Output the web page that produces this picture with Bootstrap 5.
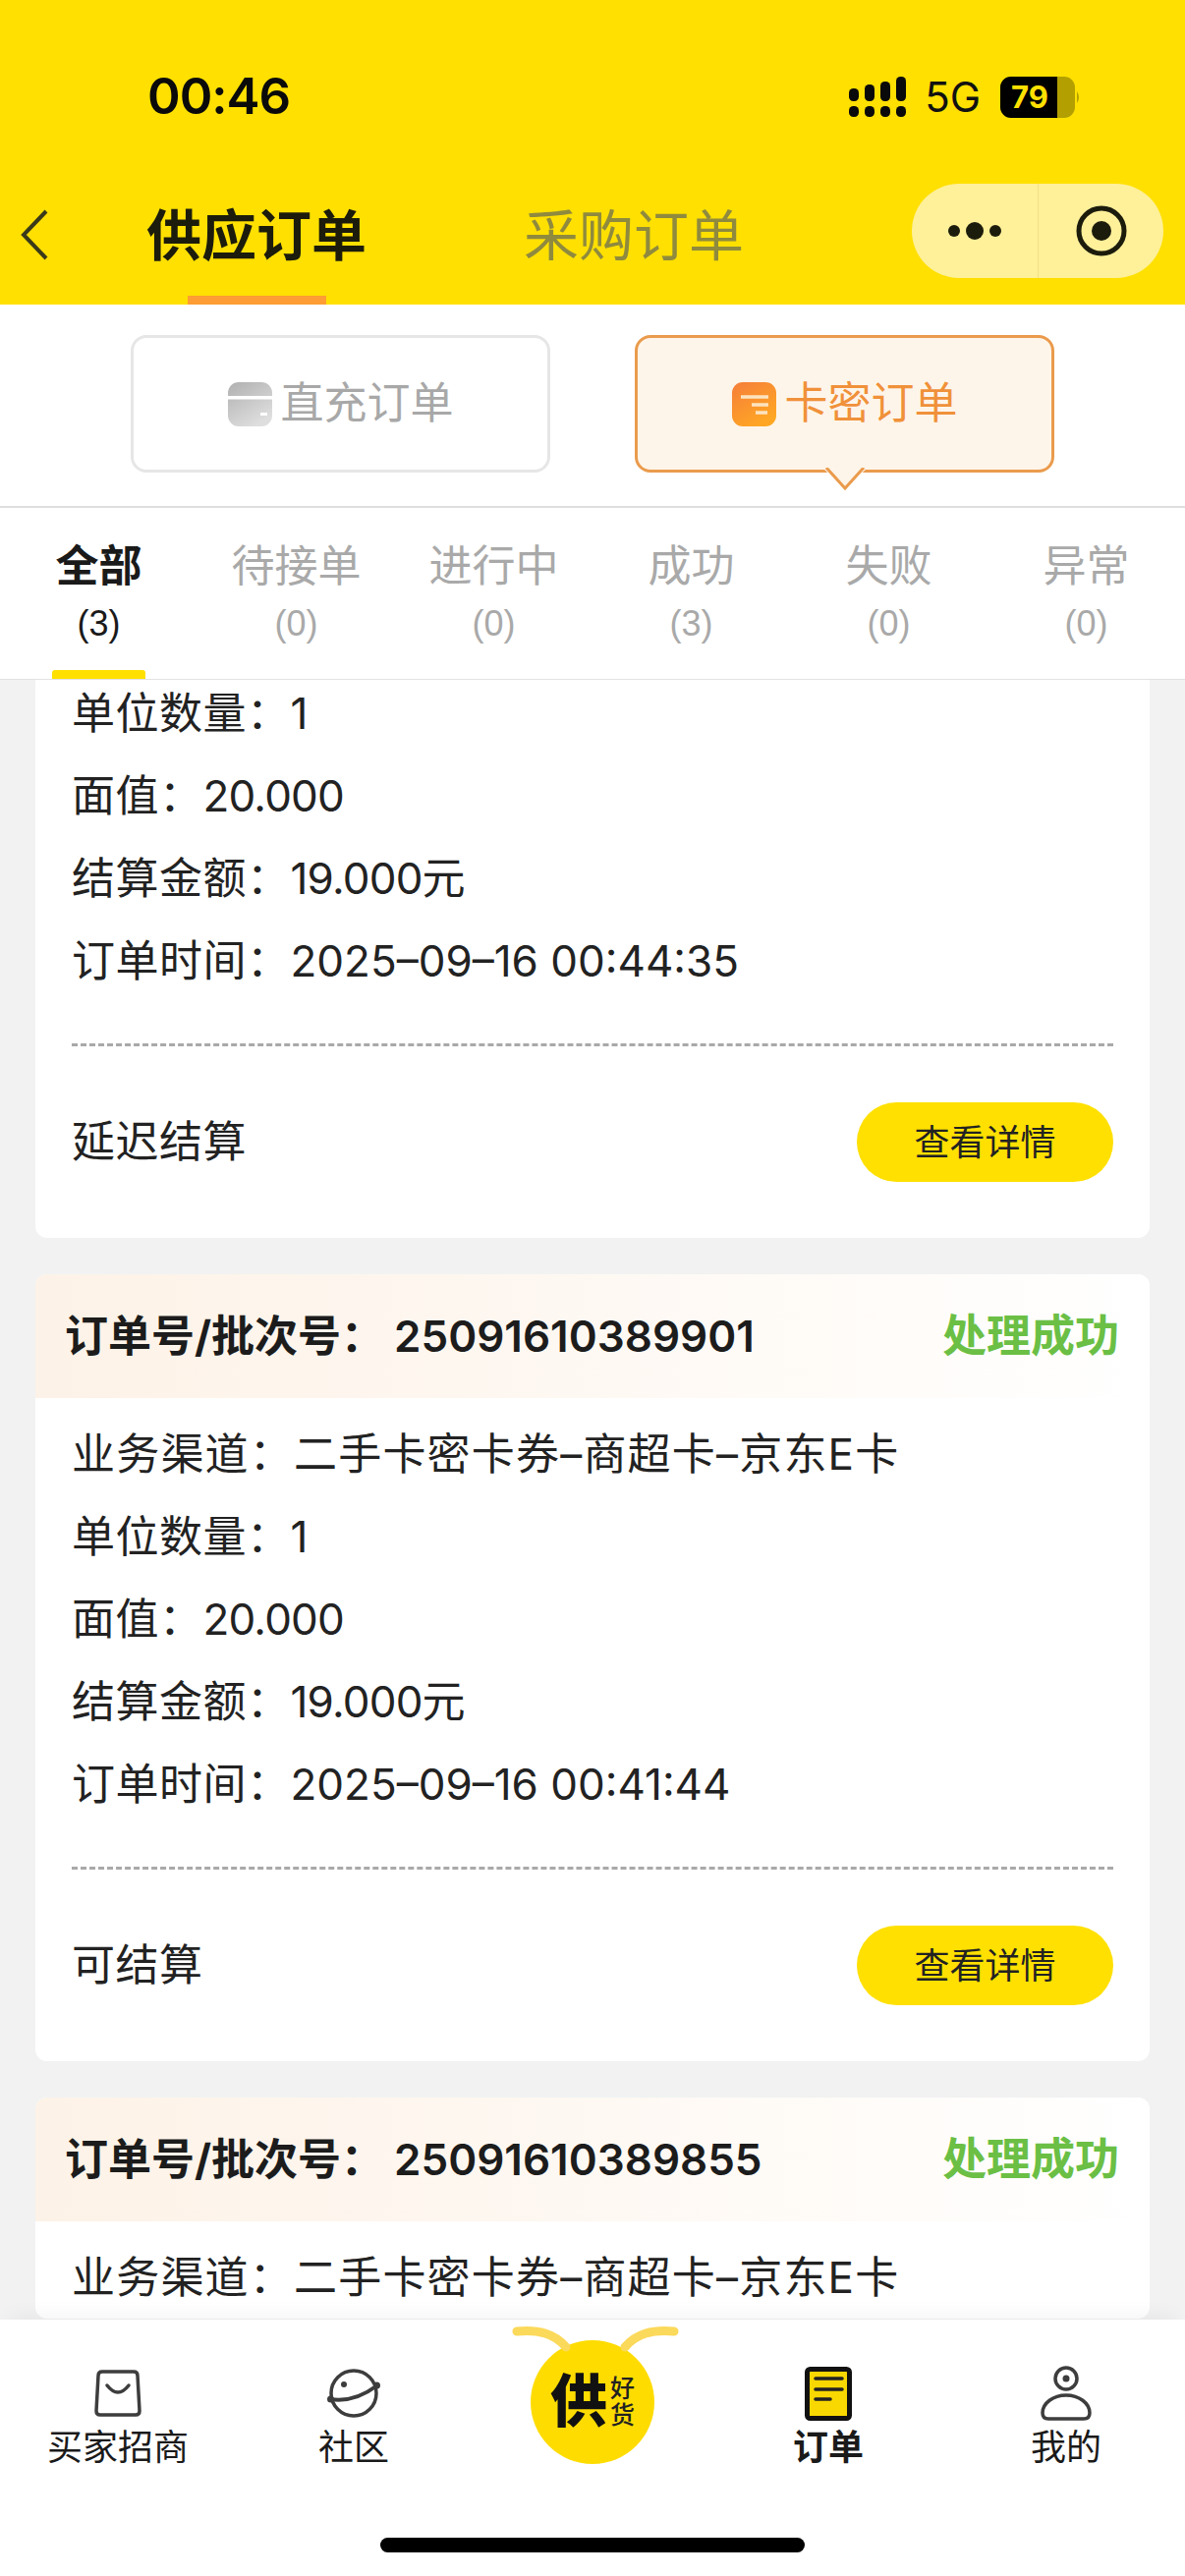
<!DOCTYPE html>
<html lang="zh-CN">
<head>
  <meta charset="UTF-8" />
  <title>供应订单</title>
  <meta name="viewport" content="width=device-width, initial-scale=1" />
  <link href="https://cdn.jsdelivr.net/npm/bootstrap@5.3.0/dist/css/bootstrap.min.css" rel="stylesheet" />
  <style>
    body {
      font-family: "Liberation Sans", "Noto Sans CJK SC", sans-serif;
      color: #1c1c1c;
      background: #f2f2f2;
    }
    .phone { width: 1206px; height: 2622px; overflow: hidden; }

    /* yellow top */
    .top-head { height: 310px; background: #ffe000; flex: none; }
    .status-row { height: 187px; padding: 10px 106px 0 150px; }
    .status-time { font-family: Inter, sans-serif; font-size: 51px; font-weight: 600; color: #0a0a0a; letter-spacing: -1px; }
    .status-net { font-family: Inter, sans-serif; font-size: 42px; color: #111; margin: 0 20px 0 19px; }
    .nav-row { height: 123px; }
    .back-btn { width: 148px; padding: 26px 0 0 20px; }
    .head-tab { font-size: 56px; line-height: 56px; padding-top: 26px; width: 226px; white-space: nowrap; }
    .head-tab.on { font-weight: 700; color: #1c1c0c; }
    .head-tab.off { color: #8f8a3e; margin-left: 159px; }
    .head-bar { width: 141px; height: 9px; background: #fd9d33; margin-top: auto; }
    .capsule { width: 256px; height: 96px; background: #fff09a; border-radius: 48px; margin: 0 22px 0 auto; }
    .capsule-cell { width: 128px; height: 100%; }
    .capsule-cell + .capsule-cell { border-left: 1px solid #f2e283; }

    /* direct / card switch */
    .seg-row { height: 207px; background: #fff; border-bottom: 2px solid #dedede; padding-top: 31px; gap: 86px; flex: none; }
    .seg-btn {
      width: 427px; height: 140px; border: 3px solid #e6e6e6; border-radius: 16px;
      font-size: 44px; color: #a8a8a8; gap: 9px; position: relative; background: #fff;
    }
    .seg-btn.on { border-color: #ea9b4c; background: #fef5ea; color: #f0913a; }
    .seg-arrow { position: absolute; left: 50%; margin-left: -21px; bottom: -22px; }

    /* status tabs */
    .tab-row { height: 175px; background: #fff; border-bottom: 1px solid #e2e2e2; flex: none; }
    .tab-item { width: 201px; color: #a9a9a9; }
    .tab-name { font-size: 44px; line-height: 44px; margin-top: 38px; }
    .tab-num { font-size: 36px; line-height: 36px; margin-top: 18px; }
    .tab-item.on { color: #1a1a1a; }
    .tab-item.on .tab-name { font-weight: 700; }
    .tab-line { width: 95px; height: 9px; margin-top: auto; border-radius: 3px 3px 0 0; }
    .tab-item.on .tab-line { background: #ffe000; }

    /* order list */
    .order-list { flex: 1 1 0; min-height: 0; overflow: hidden; padding: 0 36px; font-family: Inter, "Noto Sans CJK SC", sans-serif; }
    .order-box { background: #fff; border-radius: 12px; margin-bottom: 37px; flex: none; }
    .order-box.cut { border-radius: 0 0 12px 12px; margin-top: -8px; }
    .order-head {
      height: 126px; padding: 0 31px 0 30px; border-radius: 12px 12px 0 0;
      background: linear-gradient(90deg, #fdf2e7, #fffdfb 85%, #fff);
      font-size: 44px; font-weight: 700;
    }
    .order-num { font-weight: 600; margin-left: 10px; }
    .order-state { color: #6bbf45; font-size: 45px; }
    .order-body { padding: 15px 37px 0; }
    .order-line { height: 84px; line-height: 84px; font-size: 44px; color: #222; white-space: nowrap; letter-spacing: .5px; }
    .order-line.wide { letter-spacing: 1.2px; }
    .order-val { letter-spacing: -.8px; }
    .order-time { letter-spacing: 0; }
    .order-foot { border-top: 3px dashed #a9a9a9; margin-top: 42px; height: 198px; padding-top: 57px; font-size: 44px; color: #222; }
    .foot-label { line-height: 81px; letter-spacing: .5px; }
    .detail-btn {
      width: 261px; height: 81px; border: 0; border-radius: 41px; background: #ffe000;
      font-size: 36px; color: #222; padding: 0;
    }

    /* bottom bar */
    .foot-bar { height: 261px; background: #fff; box-shadow: 0 -14px 18px -10px rgba(0,0,0,.05); flex: none; position: relative; }
    .foot-item { width: 240px; padding-top: 46px; font-size: 36px; line-height: 40px; color: #1a1a1a; }
    .foot-item.last-one { margin-left: 2px; }
    .foot-icon { height: 58px; margin-bottom: 7px; }
    .foot-mid { width: 240px; margin-left: 3px; }
    .bee-logo { width: 126px; height: 126px; border-radius: 50%; background: #ffdc00; margin: 21px auto 0; gap: 3px; position: relative; }
    .bee-horn { position: absolute; left: -19px; top: -17px; }
    .bee-big { font-size: 58px; font-weight: 900; color: #111; line-height: 58px; }
    .bee-small { font-size: 25px; line-height: 27px; color: #222; font-weight: 500; }
    .home-line { position: absolute; left: 387px; bottom: 24px; width: 432px; height: 15px; border-radius: 8px; background: #000; }
  </style>
</head>
<body>
  <div class="phone d-flex flex-column">
    <div class="top-head">
      <div class="status-row d-flex align-items-center">
        <span class="status-time">00:46</span>
        <div class="ms-auto d-flex align-items-center">
          <svg width="58" height="41" viewBox="0 0 58 41" fill="#0a0a0a">
            <rect x="0" y="12" width="10" height="13" rx="4.5"/><rect x="0" y="30" width="10" height="11" rx="4.5"/>
            <rect x="16" y="8" width="10" height="17" rx="4.5"/><rect x="16" y="30" width="10" height="11" rx="4.5"/>
            <rect x="32" y="5" width="10" height="20" rx="4.5"/><rect x="32" y="30" width="10" height="11" rx="4.5"/>
            <rect x="48" y="0" width="10" height="25" rx="4.5"/><rect x="48" y="30" width="10" height="11" rx="4.5"/>
          </svg>
          <span class="status-net">5G</span>
          <svg width="82" height="42" viewBox="0 0 82 42">
            <rect x="0" y="0" width="76" height="42" rx="11" fill="#b3a000"/>
            <path d="M11 0H58V42H11A11 11 0 0 1 0 31V11A11 11 0 0 1 11 0Z" fill="#000"/>
            <path d="M78 15q4 6 0 12z" fill="#b3a000"/>
            <text x="30" y="32" font-family="Inter, sans-serif" font-size="31" font-weight="700" fill="#ffe000" text-anchor="middle">79</text>
          </svg>
        </div>
      </div>
      <div class="nav-row d-flex">
        <div class="back-btn">
          <svg width="30" height="52" viewBox="0 0 30 52" fill="none" stroke="#3a3a1a" stroke-width="4"><path d="M27 2L4 26l23 24"/></svg>
        </div>
        <div class="head-tab on d-flex flex-column align-items-center">供应订单<div class="head-bar"></div></div>
        <div class="head-tab off">采购订单</div>
        <div class="capsule d-flex">
          <div class="capsule-cell d-flex align-items-center justify-content-center">
            <svg width="58" height="20" viewBox="0 0 58 20" fill="#1c1c0c"><circle cx="8" cy="10" r="6"/><circle cx="29" cy="10" r="9"/><circle cx="50" cy="10" r="6"/></svg>
          </div>
          <div class="capsule-cell d-flex align-items-center justify-content-center">
            <svg width="52" height="52" viewBox="0 0 52 52"><circle cx="26" cy="26" r="23" fill="none" stroke="#1c1c0c" stroke-width="5"/><circle cx="26" cy="26" r="10" fill="#1c1c0c"/></svg>
          </div>
        </div>
      </div>
    </div>

    <div class="seg-row d-flex justify-content-center align-items-start">
      <div class="seg-btn d-flex align-items-center justify-content-center">
        <svg width="45" height="45" viewBox="0 0 45 45">
          <defs><linearGradient id="gr" x1="0" y1="0" x2="0.6" y2="1"><stop offset="0" stop-color="#b0b0b0"/><stop offset="1" stop-color="#dedede"/></linearGradient></defs>
          <rect width="45" height="45" rx="11" fill="url(#gr)"/>
          <rect y="14" width="45" height="3.5" fill="#fff"/>
          <rect x="33" y="31" width="7" height="3" fill="#fff"/>
        </svg>
        <span>直充订单</span>
      </div>
      <div class="seg-btn on d-flex align-items-center justify-content-center">
        <svg width="45" height="45" viewBox="0 0 45 45">
          <defs><linearGradient id="or" x1="0" y1="0" x2="0.6" y2="1"><stop offset="0" stop-color="#f57e3a"/><stop offset="1" stop-color="#ffa724"/></linearGradient></defs>
          <rect width="45" height="45" rx="11" fill="url(#or)"/>
          <path d="M9 15h28M20 23h17M24 31h12" stroke="#fde3c0" stroke-width="3.5" fill="none"/>
        </svg>
        <span>卡密订单</span>
        <svg class="seg-arrow" width="42" height="24" viewBox="0 0 42 24">
          <path d="M0 2H42L21 21Z" fill="#fef5ea"/>
          <path d="M2 0L21 21L40 0" fill="none" stroke="#ea9b4c" stroke-width="3"/>
        </svg>
      </div>
    </div>

    <div class="tab-row d-flex">
      <div class="tab-item on d-flex flex-column align-items-center"><div class="tab-name">全部</div><div class="tab-num">(3)</div><div class="tab-line"></div></div>
      <div class="tab-item d-flex flex-column align-items-center"><div class="tab-name">待接单</div><div class="tab-num">(0)</div><div class="tab-line"></div></div>
      <div class="tab-item d-flex flex-column align-items-center"><div class="tab-name">进行中</div><div class="tab-num">(0)</div><div class="tab-line"></div></div>
      <div class="tab-item d-flex flex-column align-items-center"><div class="tab-name">成功</div><div class="tab-num">(3)</div><div class="tab-line"></div></div>
      <div class="tab-item d-flex flex-column align-items-center"><div class="tab-name">失败</div><div class="tab-num">(0)</div><div class="tab-line"></div></div>
      <div class="tab-item d-flex flex-column align-items-center"><div class="tab-name">异常</div><div class="tab-num">(0)</div><div class="tab-line"></div></div>
    </div>

    <div class="order-list d-flex flex-column">
      <!-- first card is scrolled partly under the tabs -->
      <div class="order-box cut">
        <div class="order-body pt-0">
          <div class="order-line">单位数量：1</div>
          <div class="order-line">面值：<span class="order-val">20.000</span></div>
          <div class="order-line">结算金额：<span class="order-val">19.000</span>元</div>
          <div class="order-line">订单时间：<span class="order-time">2025–09–16 00:44:35</span></div>
          <div class="order-foot d-flex justify-content-between align-items-start">
            <span class="foot-label">延迟结算</span>
            <button class="detail-btn" type="button">查看详情</button>
          </div>
        </div>
      </div>

      <div class="order-box">
        <div class="order-head d-flex align-items-center justify-content-between">
          <span>订单号/批次号：<span class="order-num">25091610389901</span></span>
          <span class="order-state">处理成功</span>
        </div>
        <div class="order-body">
          <div class="order-line wide">业务渠道：二手卡密卡券–商超卡–京东E卡</div>
          <div class="order-line">单位数量：1</div>
          <div class="order-line">面值：<span class="order-val">20.000</span></div>
          <div class="order-line">结算金额：<span class="order-val">19.000</span>元</div>
          <div class="order-line">订单时间：<span class="order-time">2025–09–16 00:41:44</span></div>
          <div class="order-foot d-flex justify-content-between align-items-start">
            <span class="foot-label">可结算</span>
            <button class="detail-btn" type="button">查看详情</button>
          </div>
        </div>
      </div>

      <div class="order-box">
        <div class="order-head d-flex align-items-center justify-content-between">
          <span>订单号/批次号：<span class="order-num">25091610389855</span></span>
          <span class="order-state">处理成功</span>
        </div>
        <div class="order-body">
          <div class="order-line wide">业务渠道：二手卡密卡券–商超卡–京东E卡</div>
        </div>
      </div>
    </div>

    <div class="foot-bar d-flex">
      <div class="foot-item d-flex flex-column align-items-center">
        <div class="foot-icon d-flex align-items-center">
          <svg width="48" height="48" viewBox="0 0 48 48" fill="none" stroke="#3d3d3d" stroke-width="3.5" stroke-linejoin="round"><path d="M8 2H40Q44 2 44 6L46 42Q46 46 42 46H6Q2 46 2 42L4 6Q4 2 8 2Z"/><path d="M13 16q11 14 22 0" stroke-linecap="round"/></svg>
        </div>
        <span>买家招商</span>
      </div>
      <div class="foot-item d-flex flex-column align-items-center">
        <div class="foot-icon d-flex align-items-center">
          <svg width="56" height="52" viewBox="0 0 56 52" fill="none" stroke="#3d3d3d" stroke-width="3.5"><circle cx="28" cy="26" r="23"/><path d="M4 32q24 4 48-14" stroke-width="4"/><circle cx="4.5" cy="32" r="3.5" fill="#3d3d3d" stroke="none"/><circle cx="51.5" cy="18" r="3.5" fill="#3d3d3d" stroke="none"/><circle cx="18" cy="17" r="3" fill="#3d3d3d" stroke="none"/></svg>
        </div>
        <span>社区</span>
      </div>
      <div class="foot-mid">
        <div class="bee-logo d-flex align-items-center justify-content-center">
          <svg class="bee-horn" width="170" height="32" viewBox="0 0 170 32" fill="none" stroke="#fbd95a" stroke-width="9" stroke-linecap="round"><path d="M5 8c22-2 38 2 50 16M165 8c-22-2-38 2-50 16"/></svg>
          <span class="bee-big">供</span>
          <div class="d-flex flex-column"><span class="bee-small">好</span><span class="bee-small">货</span></div>
        </div>
      </div>
      <div class="foot-item d-flex flex-column align-items-center">
        <div class="foot-icon d-flex align-items-center">
          <svg width="48" height="55" viewBox="0 0 48 55"><rect x="2.5" y="2.5" width="43" height="50" rx="3" fill="#f8d800" stroke="#111" stroke-width="5"/><path d="M11 12h27M11 23h27M11 33h15" stroke="#222" stroke-width="3.5" fill="none" stroke-linecap="round"/></svg>
        </div>
        <span class="fw-bold">订单</span>
      </div>
      <div class="foot-item last-one d-flex flex-column align-items-center">
        <div class="foot-icon d-flex align-items-center">
          <svg width="52" height="56" viewBox="0 0 52 56" fill="none" stroke="#3d3d3d" stroke-width="3.5"><circle cx="26" cy="13" r="11"/><circle cx="26" cy="13" r="3.5" fill="#3d3d3d" stroke="none"/><path d="M2 48C2 38 13 30 26 30s24 8 24 18q0 6-6 6H8q-6 0-6-6z"/></svg>
        </div>
        <span>我的</span>
      </div>
      <div class="home-line"></div>
    </div>
  </div>
  <script src="https://cdn.jsdelivr.net/npm/bootstrap@5.3.0/dist/js/bootstrap.bundle.min.js"></script>
</body>
</html>
